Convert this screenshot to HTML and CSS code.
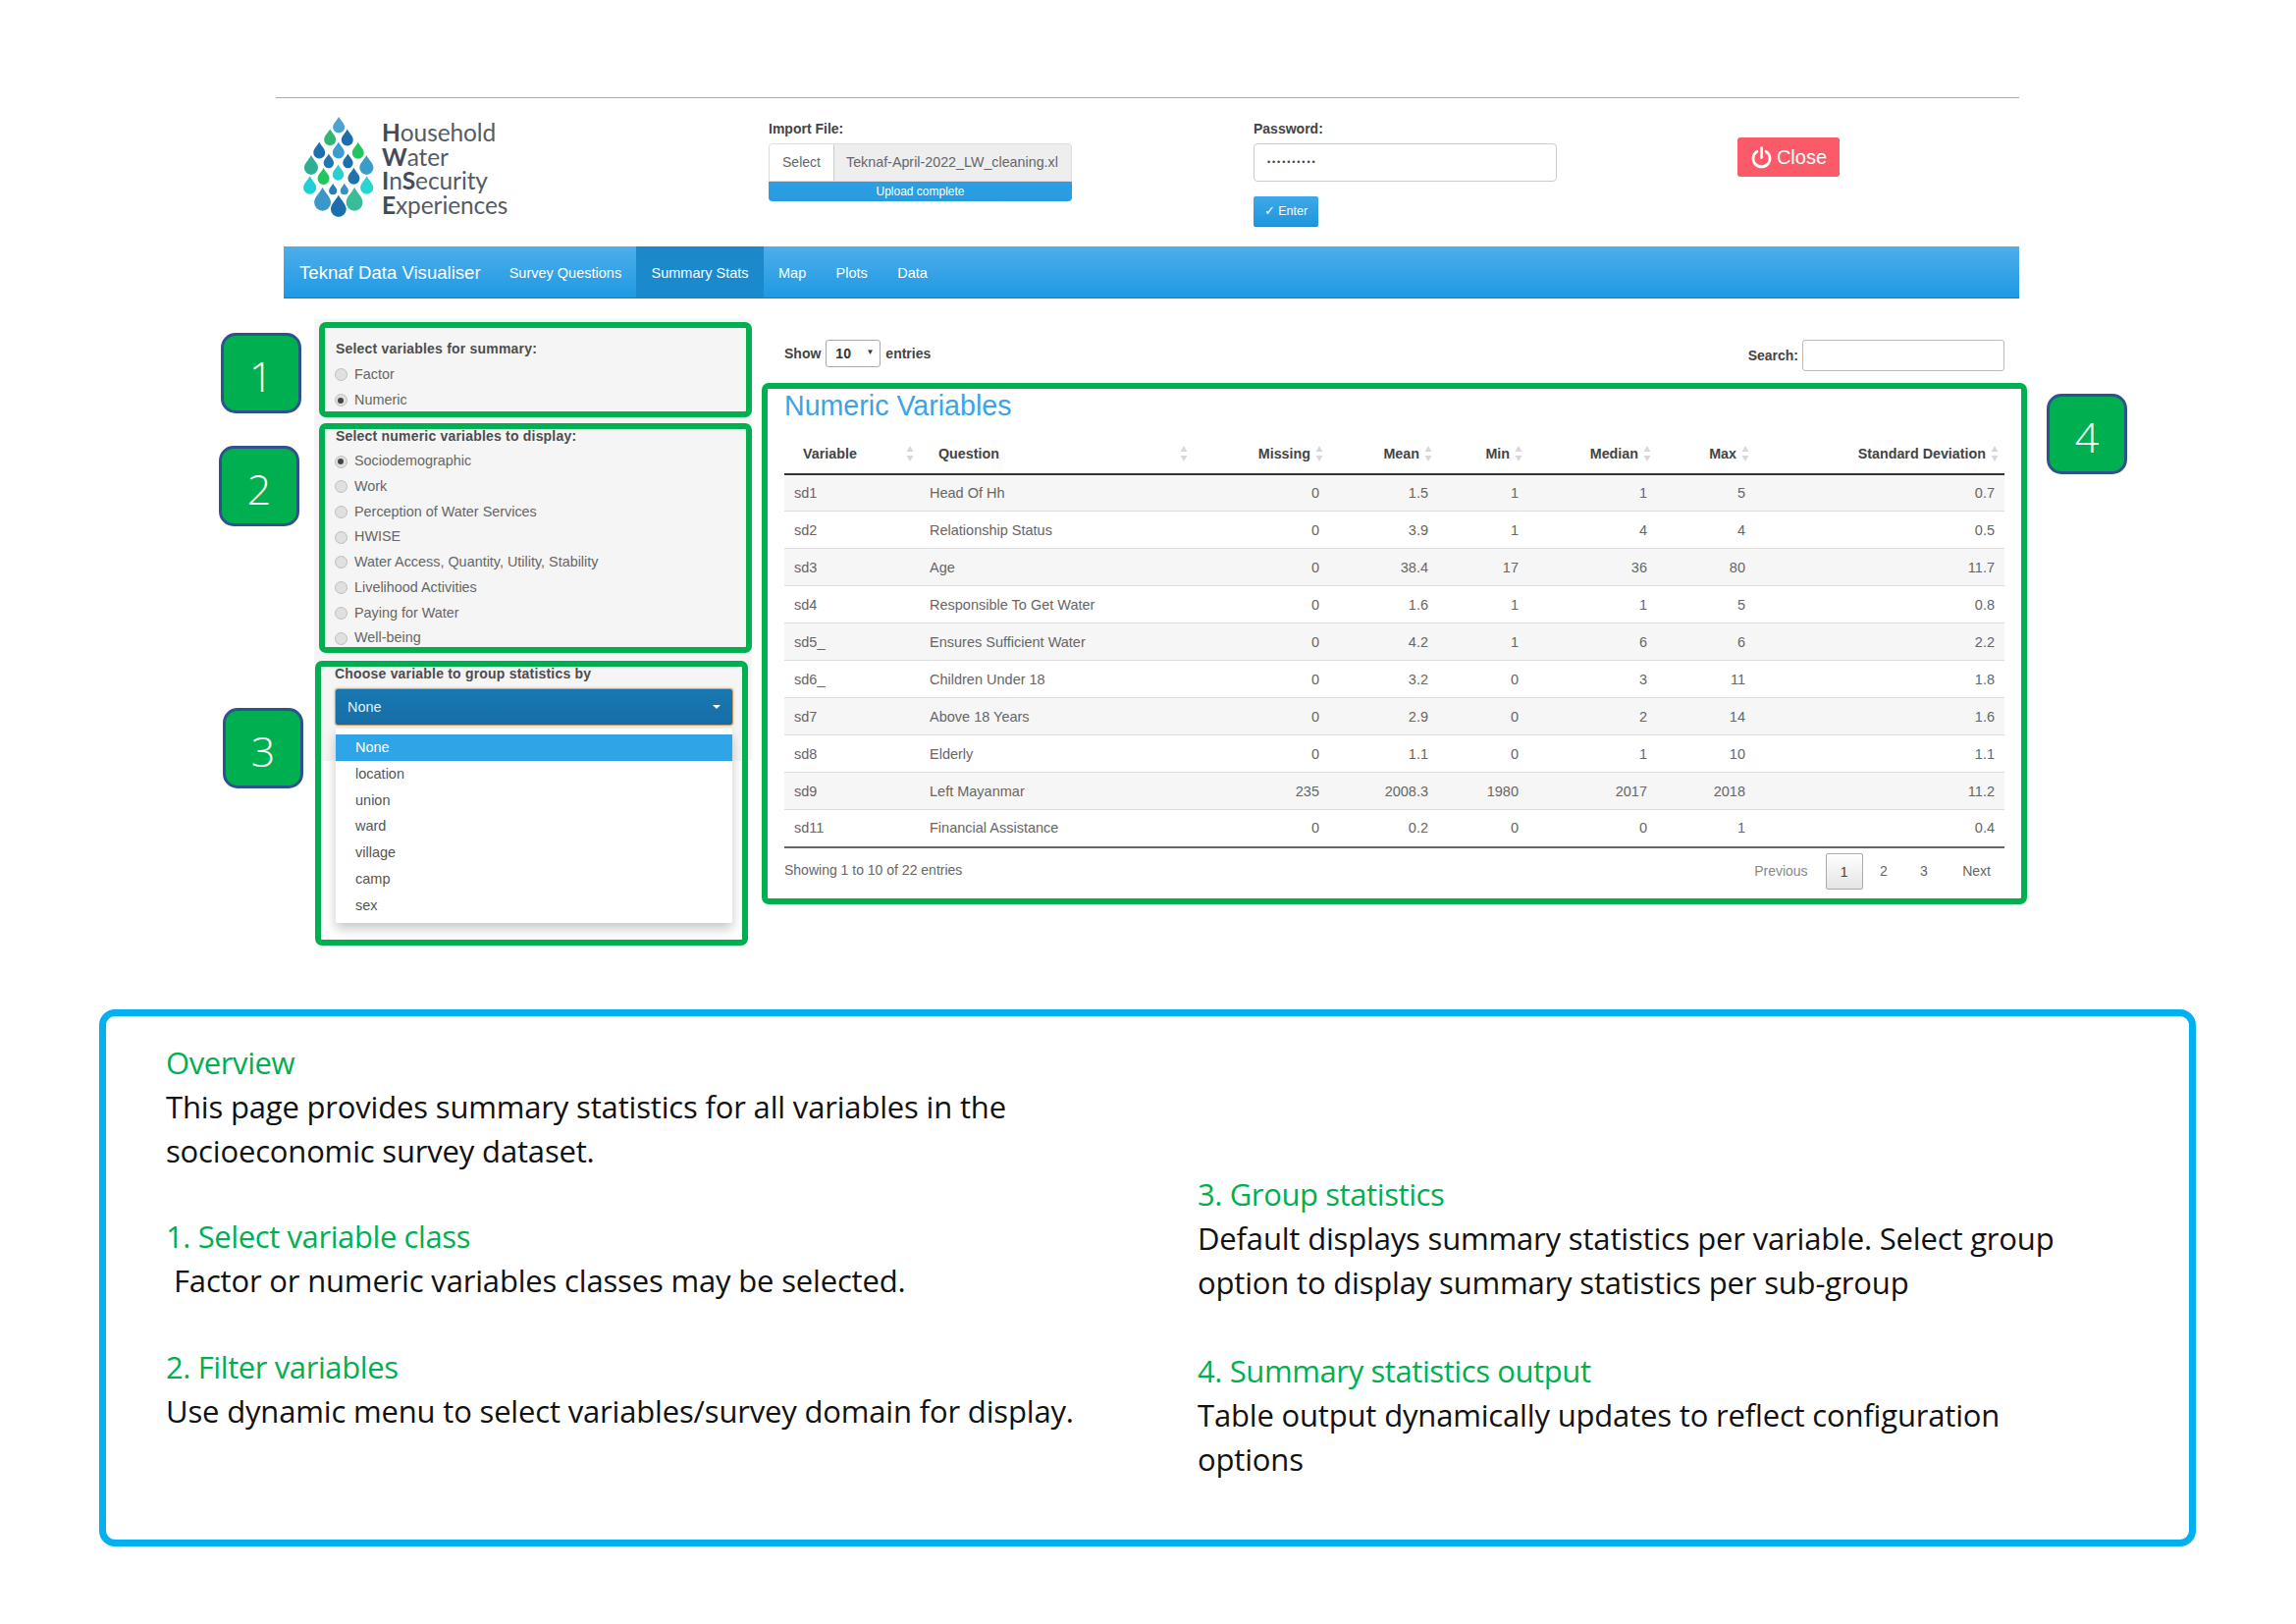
FILE: index.html
```html
<!DOCTYPE html>
<html lang="en">
<head>
<meta charset="utf-8">
<title>Teknaf Data Visualiser</title>
<link rel="stylesheet" href="styles.css">
</head>
<body>
<svg class="defs" width="0" height="0"><defs>
  <path id="drop" d="M0-1.15C.25-.6.82-.2.82.35A.82.82 0 0 1-.82.35C-.82-.2-.25-.6 0-1.15Z"/>
  <g id="sorter"><path d="M4 0L7.5 6H.5Z"/><path d="M4 16L.5 10H7.5Z"/></g>
</defs></svg>
<div class="canvas">
  <div class="app">
    <header class="header">
      <div class="brand-block">
        <svg class="logo" viewBox="55 40 220 310" width="73" height="103">
          <use href="#drop" transform="translate(167 67) scale(22)" fill="#4ba3cf"/>
          <use href="#drop" transform="translate(140 105) scale(22)" fill="#2fb874"/>
          <use href="#drop" transform="translate(193 106) scale(22)" fill="#1c6fa8"/>
          <use href="#drop" transform="translate(107 145) scale(22)" fill="#1f6fb0"/>
          <use href="#drop" transform="translate(166 145) scale(22)" fill="#3a9fd0"/>
          <use href="#drop" transform="translate(226 146) scale(22)" fill="#23c55e"/>
          <use href="#drop" transform="translate(82 190) scale(26)" fill="#2fae93"/>
          <use href="#drop" transform="translate(136 178) scale(19)" fill="#2476b2"/>
          <use href="#drop" transform="translate(195 178) scale(19)" fill="#1d6fa9"/>
          <use href="#drop" transform="translate(252 190) scale(26)" fill="#3a9ccb"/>
          <use href="#drop" transform="translate(120 225) scale(22)" fill="#22c55e"/>
          <use href="#drop" transform="translate(165 213) scale(21)" fill="#25d0d0"/>
          <use href="#drop" transform="translate(213 224) scale(22)" fill="#1f73ad"/>
          <use href="#drop" transform="translate(78 252) scale(24)" fill="#1fd0d8"/>
          <use href="#drop" transform="translate(253 252) scale(24)" fill="#28d5cf"/>
          <use href="#drop" transform="translate(149 264) scale(15)" fill="#2a80b5"/>
          <use href="#drop" transform="translate(184 264) scale(15)" fill="#3490c5"/>
          <use href="#drop" transform="translate(117 295) scale(31)" fill="#3b97c8"/>
          <use href="#drop" transform="translate(215 295) scale(31)" fill="#3bbc98"/>
          <use href="#drop" transform="translate(166 316) scale(29)" fill="#1c6fae"/>
        </svg>
        <div class="logo-text">
          <div><b>H</b>ousehold</div>
          <div><b>W</b>ater</div>
          <div><b>I</b>n<b>S</b>ecurity</div>
          <div><b>E</b>xperiences</div>
        </div>
      </div>
      <div class="field">
        <div class="field-label">Import File:</div>
        <div class="file-input">
          <span class="file-btn">Select</span>
          <span class="file-name">Teknaf-April-2022_LW_cleaning.xl</span>
        </div>
        <div class="progress">Upload complete</div>
      </div>
      <div class="field">
        <div class="field-label">Password:</div>
        <div class="pass-input">••••••••••</div>
        <div class="enter-btn">✓ Enter</div>
      </div>
      <div class="close-cell">
        <div class="close-btn">
          <svg class="power" viewBox="0 0 20 20" width="23" height="23"><path d="M6 4.6A7.4 7.4 0 1 0 14 4.6M10 1.5V10"/></svg>
          <span>Close</span>
        </div>
      </div>
    </header>
    <nav class="nav">
      <span class="nav-brand">Teknaf Data Visualiser</span>
      <span class="nav-item">Survey Questions</span>
      <span class="nav-item active">Summary Stats</span>
      <span class="nav-item">Map</span>
      <span class="nav-item">Plots</span>
      <span class="nav-item">Data</span>
    </nav>
    <div class="workspace">
      <aside class="well">
        <div class="group-label">Select variables for summary:</div>
        <div class="radio"><i class="dot"></i>Factor</div>
        <div class="radio"><i class="dot on"></i>Numeric</div>
        <div class="group-label second">Select numeric variables to display:</div>
        <div class="radio"><i class="dot on"></i>Sociodemographic</div>
        <div class="radio"><i class="dot"></i>Work</div>
        <div class="radio"><i class="dot"></i>Perception of Water Services</div>
        <div class="radio"><i class="dot"></i>HWISE</div>
        <div class="radio"><i class="dot"></i>Water Access, Quantity, Utility, Stability</div>
        <div class="radio"><i class="dot"></i>Livelihood Activities</div>
        <div class="radio"><i class="dot"></i>Paying for Water</div>
        <div class="radio"><i class="dot"></i>Well-being</div>
        <div class="group-label third">Choose variable to group statistics by</div>
        <div class="picker">
          <div class="picker-btn"><span>None</span><i class="caret"></i></div>
          <ul class="menu">
            <li class="current">None</li>
            <li>location</li>
            <li>union</li>
            <li>ward</li>
            <li>village</li>
            <li>camp</li>
            <li>sex</li>
          </ul>
        </div>
      </aside>
      <section class="results">
        <div class="controls">
          <div class="show"><b>Show</b><span class="len-select"><span>10</span><i class="len-arrow">▼</i></span><b>entries</b></div>
          <div class="search"><b>Search:</b><span class="search-box"></span></div>
        </div>
        <h2 class="title">Numeric Variables</h2>
        <table class="stats">
          <colgroup>
            <col class="c1"><col class="c2"><col class="c3"><col class="c4"><col class="c5"><col class="c6"><col class="c7"><col class="c8">
          </colgroup>
          <thead>
            <tr>
              <th><div class="th-in spread">Variable<svg class="sort" width="8" height="16"><use href="#sorter"/></svg></div></th>
              <th><div class="th-in spread">Question<svg class="sort" width="8" height="16"><use href="#sorter"/></svg></div></th>
              <th><div class="th-in">Missing<svg class="sort" width="8" height="16"><use href="#sorter"/></svg></div></th>
              <th><div class="th-in">Mean<svg class="sort" width="8" height="16"><use href="#sorter"/></svg></div></th>
              <th><div class="th-in">Min<svg class="sort" width="8" height="16"><use href="#sorter"/></svg></div></th>
              <th><div class="th-in">Median<svg class="sort" width="8" height="16"><use href="#sorter"/></svg></div></th>
              <th><div class="th-in">Max<svg class="sort" width="8" height="16"><use href="#sorter"/></svg></div></th>
              <th><div class="th-in">Standard Deviation<svg class="sort" width="8" height="16"><use href="#sorter"/></svg></div></th>
            </tr>
          </thead>
          <tbody>
            <tr><td>sd1</td><td>Head Of Hh</td><td>0</td><td>1.5</td><td>1</td><td>1</td><td>5</td><td>0.7</td></tr>
            <tr><td>sd2</td><td>Relationship Status</td><td>0</td><td>3.9</td><td>1</td><td>4</td><td>4</td><td>0.5</td></tr>
            <tr><td>sd3</td><td>Age</td><td>0</td><td>38.4</td><td>17</td><td>36</td><td>80</td><td>11.7</td></tr>
            <tr><td>sd4</td><td>Responsible To Get Water</td><td>0</td><td>1.6</td><td>1</td><td>1</td><td>5</td><td>0.8</td></tr>
            <tr><td>sd5_</td><td>Ensures Sufficient Water</td><td>0</td><td>4.2</td><td>1</td><td>6</td><td>6</td><td>2.2</td></tr>
            <tr><td>sd6_</td><td>Children Under 18</td><td>0</td><td>3.2</td><td>0</td><td>3</td><td>11</td><td>1.8</td></tr>
            <tr><td>sd7</td><td>Above 18 Years</td><td>0</td><td>2.9</td><td>0</td><td>2</td><td>14</td><td>1.6</td></tr>
            <tr><td>sd8</td><td>Elderly</td><td>0</td><td>1.1</td><td>0</td><td>1</td><td>10</td><td>1.1</td></tr>
            <tr><td>sd9</td><td>Left Mayanmar</td><td>235</td><td>2008.3</td><td>1980</td><td>2017</td><td>2018</td><td>11.2</td></tr>
            <tr><td>sd11</td><td>Financial Assistance</td><td>0</td><td>0.2</td><td>0</td><td>0</td><td>1</td><td>0.4</td></tr>
          </tbody>
        </table>
        <div class="table-foot">
          <span class="info">Showing 1 to 10 of 22 entries</span>
          <div class="pager">
            <span class="page muted">Previous</span>
            <span class="page current">1</span>
            <span class="page">2</span>
            <span class="page">3</span>
            <span class="page">Next</span>
          </div>
        </div>
      </section>
    </div>
  </div>

  <section class="notes">
    <div class="notes-col first">
      <div>
        <h3>Overview</h3>
        <p>This page provides summary statistics for all variables in the<br>socioeconomic survey dataset.</p>
      </div>
      <div>
        <h3>1. Select variable class</h3>
        <p class="indent">Factor or numeric variables classes may be selected.</p>
      </div>
      <div>
        <h3>2. Filter variables</h3>
        <p>Use dynamic menu to select variables/survey domain for display.</p>
      </div>
    </div>
    <div class="notes-col second">
      <div>
        <h3>3. Group statistics</h3>
        <p>Default displays summary statistics per variable. Select group<br>option to display summary statistics per sub-group</p>
      </div>
      <div>
        <h3>4. Summary statistics output</h3>
        <p>Table output dynamically updates to reflect configuration<br>options</p>
      </div>
    </div>
  </section>

  <div class="frame f1"></div>
  <div class="frame f2"></div>
  <div class="frame f3"></div>
  <div class="frame f4"></div>
  <div class="badge b1">1</div>
  <div class="badge b2">2</div>
  <div class="badge b3">3</div>
  <div class="badge b4">4</div>
</div>
</body>
</html>
```

FILE: styles.css
```css
* { box-sizing: border-box; }
html, body { margin: 0; padding: 0; background: #fff; }
body { font-family: "Liberation Sans", Arial, sans-serif; color: #555; font-size: 14.5px; }
.defs { position: absolute; }
.canvas { position: relative; width: 2339px; height: 1654px; overflow: hidden; }

/* app */
.app { margin-left: 281px; width: 1776px; padding-top: 99px; }
.header {
  border-top: 1px solid #8fb2c9;
  height: 152px;
  display: grid;
  grid-template-columns: 502px 494px 493px 1fr;
}
.brand-block { display: flex; padding: 18px 0 0 27px; align-items: flex-start; }
.logo { display: block; }
.logo-text { margin: 5px 0 0 8px; font-family: Lato, sans-serif; font-size: 24.5px; line-height: 24.7px; color: #555b66; letter-spacing: -.1px; }
.logo-text b { color: #444a5c; font-weight: 700; }
.field { padding-top: 21px; width: 309px; }
.field-label { font-weight: 700; font-size: 14px; line-height: 20px; color: #444; height: 25px; }
.file-input { display: flex; height: 39px; border: 1px solid #ddd; border-radius: 4px 4px 0 0; overflow: hidden; background: #eee; }
.file-btn { width: 66px; flex: none; background: #fff; border-right: 1px solid #ccc; text-align: center; line-height: 37px; font-size: 14px; color: #666; }
.file-name { padding-left: 12px; line-height: 37px; font-size: 14.3px; color: #666; white-space: nowrap; overflow: hidden; }
.progress { height: 20px; background: linear-gradient(#2b9fe6, #2a9bdd); color: #fff; font-size: 12px; line-height: 21px; text-align: center; border-radius: 0 0 4px 4px; }
.pass-input { height: 39px; border: 1px solid #ccc; border-radius: 4px; padding-left: 13px; font-size: 9px; line-height: 37px; letter-spacing: 1.9px; color: #444; }
.enter-btn { margin-top: 15px; width: 66px; height: 31px; border-radius: 2px; background: linear-gradient(#3ea9ea, #1f96dc); border-bottom: 1px solid #1b85c4; color: #fff; font-size: 12.5px; line-height: 30px; text-align: center; }
.close-cell { padding-top: 40px; }
.close-btn { width: 104px; height: 40px; background: #fb5b69; border-radius: 3px; color: #fff; display: flex; align-items: center; justify-content: center; gap: 4px; font-size: 20px; }
.power { fill: none; stroke: #fff; stroke-width: 2.4; stroke-linecap: round; }

.nav {
  margin-left: 8px;
  height: 53px;
  background: linear-gradient(#4eaeea, #1f99e3);
  border-bottom: 1px solid #1b7fbd;
  display: flex;
  padding-left: 16px;
  color: #fff;
  align-items: stretch;
}
.nav-brand { font-size: 18.6px; line-height: 54px; width: 198.5px; flex: none; }
.nav-item { font-size: 14.5px; line-height: 54px; padding: 0 15.2px; }
.nav-item.active { background: linear-gradient(#1c88c9, #1a8ace); }

/* workspace */
.workspace { height: 724px; padding: 21px 0 0 39px; display: flex; align-items: flex-start; }
.well { width: 446px; height: 450px; background: #f5f5f5; border-radius: 4px; padding: 20px 19px 0 22px; flex: none; }
.group-label { font-weight: 700; font-size: 14px; line-height: 20px; color: #4d4d4d; margin-bottom: 4px; letter-spacing: .2px; white-space: nowrap; }
.group-label.second { margin-top: 14px; margin-bottom: 3px; }
.group-label.third { margin-top: 13px; margin-bottom: 5.5px; margin-left: -1px; }
.radio { height: 25.7px; line-height: 25.7px; display: flex; align-items: center; font-size: 14.4px; color: #666; white-space: nowrap; }
.dot { width: 13px; height: 13px; border-radius: 50%; background: #e0e0e0; border: 1px solid #bdbdbd; margin: 0 7.5px 0 -1.5px; flex: none; position: relative; }
.dot.on::after { content: ""; position: absolute; left: 2.5px; top: 2.5px; width: 6px; height: 6px; border-radius: 50%; background: #444; }
.picker { position: relative; margin-left: -1px; width: 406px; }
.picker-btn { height: 38px; background: linear-gradient(#1878b2, #176ea6); border: 1px solid #c99f6e; border-radius: 3px; color: #dff1fb; display: flex; align-items: center; justify-content: space-between; padding: 0 12px; font-size: 14.5px; box-shadow: 0 0 3px rgba(210, 160, 90, .6); }
.caret { width: 0; height: 0; border-left: 4px solid transparent; border-right: 4px solid transparent; border-top: 4px solid #fff; }
.menu { position: absolute; left: 1px; top: 41px; width: 404px; height: 198px; margin: 0; padding: 5.5px 0 3px; list-style: none; background: #fff; border-radius: 2px; box-shadow: 0 6px 12px rgba(0, 0, 0, .22); z-index: 2; }
.menu li { height: 26.85px; line-height: 26.85px; padding-left: 20px; font-size: 14.5px; color: #555; }
.menu li.current { background: #2fa4e7; color: #fff; }

.results { margin-left: 33px; width: 1243px; padding-top: 21px; flex: none; }
.controls { display: flex; justify-content: space-between; align-items: flex-start; height: 32px; }
.controls b { font-size: 14px; color: #444; }
.show { display: flex; align-items: center; gap: 5px; height: 28px; }
.len-select { width: 56px; height: 28px; border: 1px solid #aaa; border-radius: 3px; display: flex; justify-content: space-between; align-items: center; padding: 0 6px 0 9px; color: #333; font-weight: 700; font-size: 14px; }
.len-arrow { font-style: normal; font-size: 8px; color: #333; margin-top: -4px; }
.search { display: flex; align-items: center; gap: 4px; height: 32px; }
.search-box { width: 206px; height: 32px; border: 1px solid #bbb; border-radius: 3px; }
.title { margin: 17.5px 0 12px; font-size: 28.6px; line-height: 34px; font-weight: 400; color: #3ba3e6; }
.stats { border-collapse: collapse; table-layout: fixed; width: 1243px; }
.c1 { width: 138px; } .c2 { width: 279px; } .c3 { width: 138px; } .c4 { width: 111px; }
.c5 { width: 92px; } .c6 { width: 131px; } .c7 { width: 100px; } .c8 { width: 254px; }
.stats th { height: 41px; padding: 0 6px 0 19px; font-size: 14.3px; font-weight: 700; color: #444; border-bottom: 2px solid #333; }
.th-in { display: flex; align-items: center; justify-content: flex-end; gap: 5px; white-space: nowrap; }
.th-in.spread { justify-content: space-between; }
.sort { fill: #d8d8d8; flex: none; }
.stats td { height: 38px; padding: 0 10px; border-bottom: 1px solid #ddd; font-size: 14.5px; color: #666; text-align: right; white-space: nowrap; }
.stats td:nth-child(1), .stats td:nth-child(2) { text-align: left; }
.stats tbody tr:nth-child(odd) td { background: #f6f6f6; }
.stats tbody tr:last-child td { border-bottom: 2px solid #666; }
.table-foot { display: flex; justify-content: space-between; align-items: flex-start; padding-top: 5px; }
.info { font-size: 14px; line-height: 37px; color: #666; margin-top: -1px; }
.pager { display: flex; align-items: center; height: 37px; margin-right: -1px; }
.page { font-size: 14px; color: #666; padding: 0 16.5px; line-height: 37px; }
.page:last-child { padding: 0 15px 0 19px; }
.page.muted { color: #888; padding: 0 18px 0 15px; }
.page.current { width: 38px; padding: 0; text-align: center; height: 37px; border: 1px solid #aaa; border-radius: 2px; background: linear-gradient(#fff, #e4e4e4); color: #444; margin-right: 1px; }

/* notes */
.notes { margin-left: 101px; width: 2136px; height: 547px; border: 7px solid #00b0f0; border-radius: 16px; display: grid; grid-template-columns: 1051px 1fr; padding: 25px 0 0 61px; font-family: "Open Sans", sans-serif; font-size: 31px; line-height: 44.8px; color: #111; letter-spacing: -.17px; }
.notes h3 { margin: 0; font-size: inherit; font-weight: 400; color: #00b050; letter-spacing: -.4px; }
.notes p { margin: 0; white-space: nowrap; }
.notes p.indent { padding-left: 8px; }
.notes-col { display: flex; flex-direction: column; }
.notes-col.first { gap: 43px; }
.notes-col.second { gap: 46px; padding-top: 134px; }

/* annotations laid over the screenshot */
.frame { position: absolute; border: 6px solid #00b050; border-radius: 7px; z-index: 3; pointer-events: none; }
.f1 { left: 325px; top: 328px; width: 441px; height: 97px; }
.f2 { left: 325px; top: 431px; width: 441px; height: 234px; }
.f3 { left: 321px; top: 673px; width: 441px; height: 290px; }
.f4 { left: 776px; top: 390px; width: 1289px; height: 531px; }
.badge { position: absolute; width: 82px; height: 82px; background: #00b050; border: 3px solid #2f528f; border-radius: 15px; color: #fff; font-family: "Open Sans", sans-serif; font-size: 43px; font-weight: 300; line-height: 81px; text-align: center; z-index: 3; }
.b1 { left: 225px; top: 339px; }
.b2 { left: 223px; top: 454px; }
.b3 { left: 227px; top: 721px; }
.b4 { left: 2085px; top: 401px; }
```
